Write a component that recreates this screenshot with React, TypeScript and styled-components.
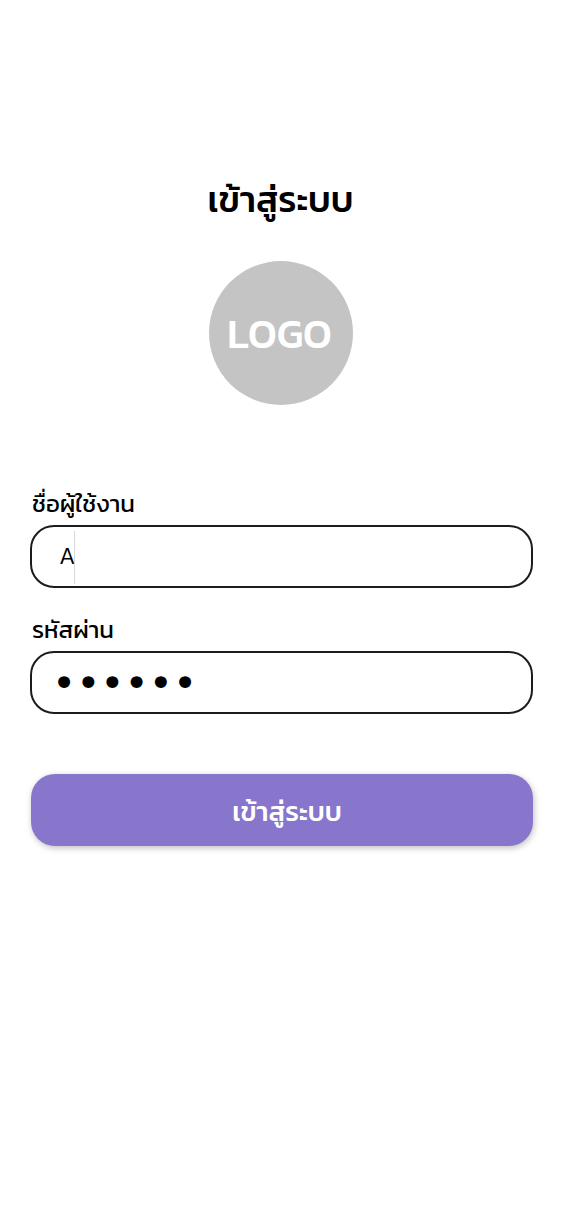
import React, { useState } from "react";
import styled, { createGlobalStyle } from "styled-components";

const fontStack = `"Kanit", "Noto Sans Thai", "Noto Sans", "Open Sans", sans-serif`;

const GlobalStyle = createGlobalStyle`
  *, *::before, *::after { box-sizing: border-box; }
  body {
    margin: 0;
    background: #ffffff;
    color: #000000;
    font-family: ${fontStack};
  }
`;

const Page = styled.main`
  min-height: 100vh;
  display: flex;
  flex-direction: column;
  padding: 175px 30px 48px;
`;

const Header = styled.header`
  display: flex;
  flex-direction: column;
  align-items: center;
  gap: 38px;
  padding-right: 2px;
`;

const Title = styled.h1`
  margin: 0;
  font-size: 36px;
  line-height: 48px;
  font-weight: 500;
  white-space: nowrap;
`;

const Logo = styled.div`
  width: 144px;
  height: 144px;
  padding: 2px 2px 0 0;
  border-radius: 50%;
  display: flex;
  align-items: center;
  justify-content: center;
  background: #c4c4c4;
  color: #ffffff;
  font-size: 41px;
  line-height: 48px;
  font-weight: 500;
`;

const Form = styled.form`
  margin-top: 80px;
  display: flex;
  flex-direction: column;
  gap: 23px;
`;

const Field = styled.div`
  display: flex;
  flex-direction: column;
`;

const Label = styled.label`
  padding: 0 0 3px 2px;
  font-size: 24px;
  line-height: 37px;
`;

const InputFrame = styled.div`
  position: relative;
  display: flex;
`;

const Input = styled.input`
  width: 100%;
  height: 63px;
  padding: 0 27px 2px;
  border: 2px solid #1c1c1c;
  border-radius: 24px;
  background: #ffffff;
  color: #000000;
  font-family: ${fontStack};
  font-size: 24px;
  font-weight: 300;
  outline: none;
`;

const PasswordInput = styled(Input)`
  padding: 0 20px;
  font-family: "DejaVu Sans", sans-serif;
  font-size: 41px;
  font-weight: 400;
`;

const Caret = styled.span`
  position: absolute;
  top: 6px;
  bottom: 4px;
  left: 44px;
  width: 1px;
  background: #d9d9d9;
  pointer-events: none;
`;

const Submit = styled.button`
  height: 72px;
  margin: 37px 0 0 1px;
  padding: 2px 0 0 10px;
  border: 0;
  border-radius: 24px;
  background: #8875cc;
  color: #ffffff;
  font-family: ${fontStack};
  font-size: 27px;
  font-weight: 500;
  box-shadow: 1px 2px 6px rgba(0, 0, 0, 0.25);
`;

export default function App() {
  const [user, setUser] = useState("A");
  const [password, setPassword] = useState("123456");
  return (
    <>
      <GlobalStyle />
      <Page>
        <Header>
          <Title>เข้าสู่ระบบ</Title>
          <Logo>LOGO</Logo>
        </Header>
        <Form onSubmit={(e) => e.preventDefault()}>
          <Field>
            <Label htmlFor="user">ชื่อผู้ใช้งาน</Label>
            <InputFrame>
              <Input id="user" value={user} onChange={(e) => setUser(e.target.value)} />
              <Caret aria-hidden="true" />
            </InputFrame>
          </Field>
          <Field>
            <Label htmlFor="password">รหัสผ่าน</Label>
            <PasswordInput
              id="password"
              type="password"
              value={password}
              onChange={(e) => setPassword(e.target.value)}
            />
          </Field>
          <Submit type="submit">เข้าสู่ระบบ</Submit>
        </Form>
      </Page>
    </>
  );
}
